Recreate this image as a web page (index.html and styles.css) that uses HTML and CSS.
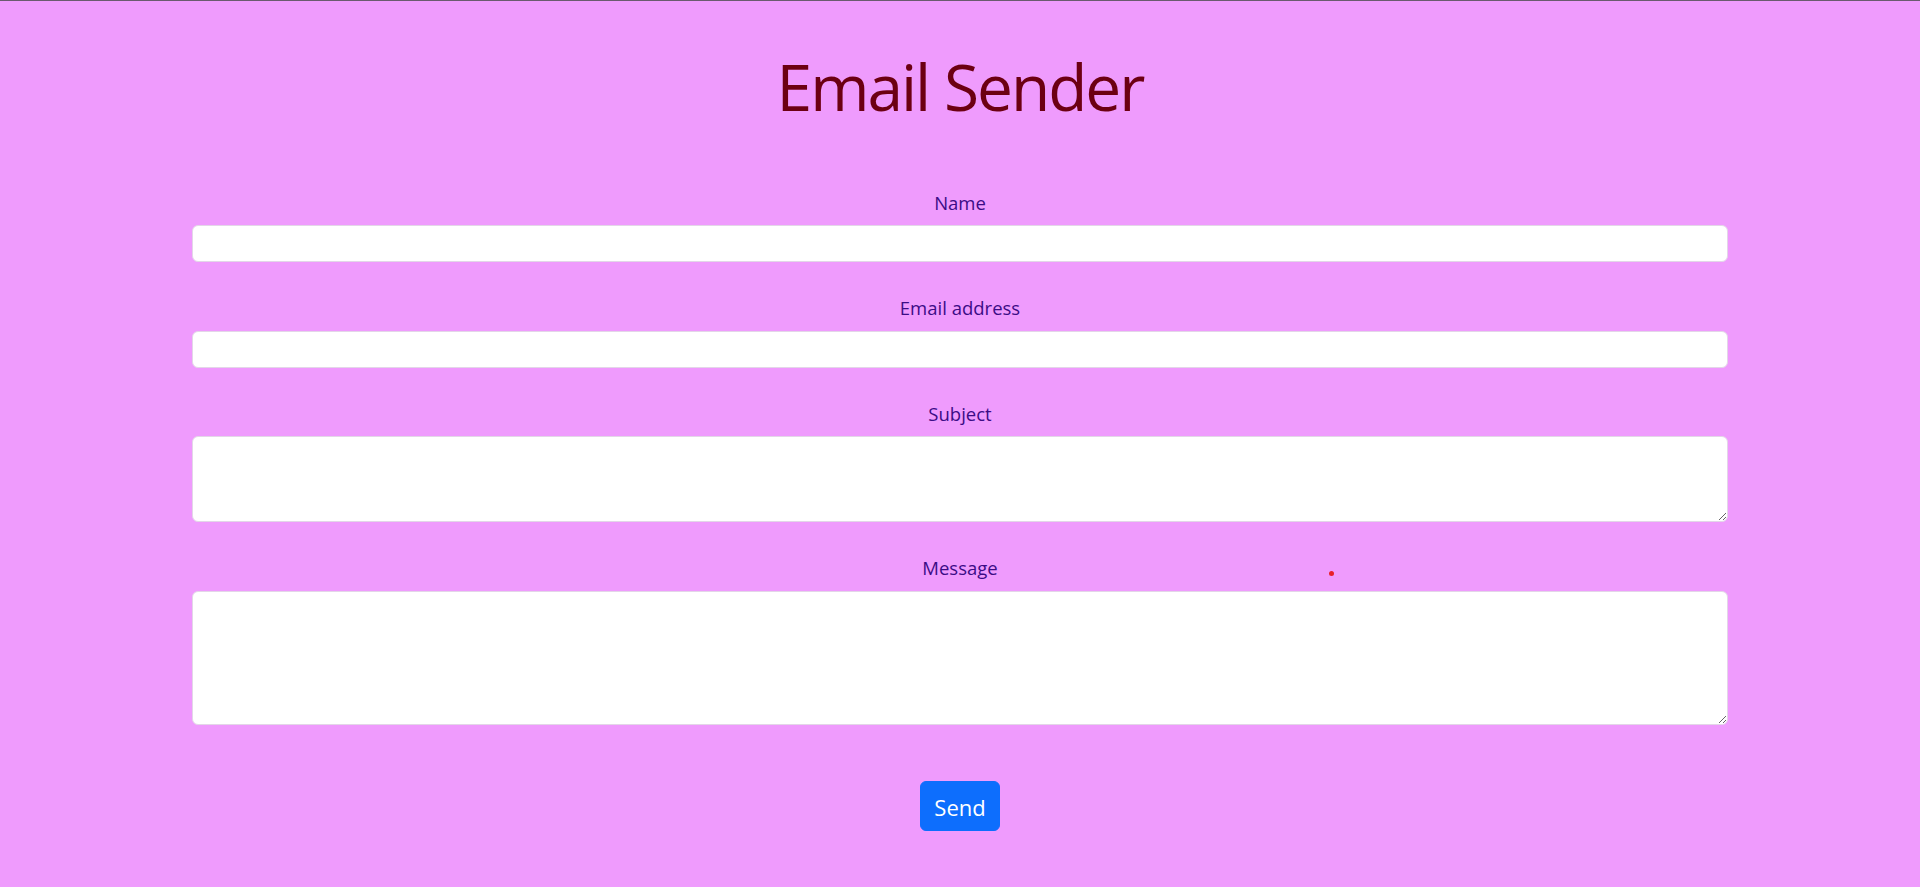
FILE: index.html
```html
<!DOCTYPE html>
<html lang="en">
<head>
<meta charset="utf-8">
<title>Email Sender</title>
<link rel="stylesheet" href="styles.css">
</head>
<body>
<div class="page">
  <h1 class="title">Email Sender</h1>
  <form class="form">
    <div class="group">
      <label class="label" for="name">Name</label>
      <input class="control" id="name" type="text">
    </div>
    <div class="group">
      <label class="label" for="email">Email address</label>
      <input class="control" id="email" type="email">
    </div>
    <div class="group">
      <label class="label" for="subject">Subject</label>
      <textarea class="control area-sm" id="subject"></textarea>
    </div>
    <div class="group">
      <label class="label" for="message">Message</label>
      <textarea class="control area-lg" id="message"></textarea>
    </div>
    <div class="actions">
      <button class="btn" type="button">Send</button>
    </div>
  </form>
  <span class="cursor-dot"></span>
</div>
</body>
</html>
```

FILE: styles.css
```css
html, body {
  margin: 0;
  padding: 0;
}
body {
  background: #ef9bfd;
  font-family: "Open Sans", "Noto Sans", sans-serif;
  min-height: 887px;
  box-sizing: border-box;
  border-top: 1px solid #6a5a6e;
}
.page {
  position: relative;
  padding-top: 48px;
}
.title {
  margin: 0;
  text-align: center;
  font-size: 64px;
  font-weight: 400;
  line-height: 1.2;
  letter-spacing: -2px;
  color: #6c0012;
}
.form {
  width: 1536px;
  margin: 63px auto 0;
  display: flex;
  flex-direction: column;
  gap: 32px;
}
.group {
  display: flex;
  flex-direction: column;
}
.label {
  display: block;
  text-align: center;
  font-size: 18.5px;
  line-height: 28.5px;
  color: #3c0c86;
  margin-bottom: 8px;
}
.control {
  display: block;
  box-sizing: border-box;
  width: 100%;
  height: 37px;
  margin: 0;
  padding: 6px 12px;
  font: inherit;
  font-size: 16px;
  background: #fff;
  border: 1px solid #e3d6e8;
  border-radius: 6px;
  outline: none;
}
.area-sm {
  height: 86px;
  resize: vertical;
}
.area-lg {
  height: 134px;
  resize: vertical;
}
.actions {
  display: flex;
  justify-content: center;
  padding-top: 24px;
}
.btn {
  width: 80px;
  height: 50px;
  padding: 2px 0 0;
  font-family: inherit;
  font-size: 22px;
  color: #fff;
  background: #0d6efd;
  border: 1px solid #0d6efd;
  border-radius: 6px;
}
.cursor-dot {
  position: absolute;
  left: 1329px;
  top: 570px;
  width: 5px;
  height: 5px;
  border-radius: 50%;
  background: #e8202a;
}
```
